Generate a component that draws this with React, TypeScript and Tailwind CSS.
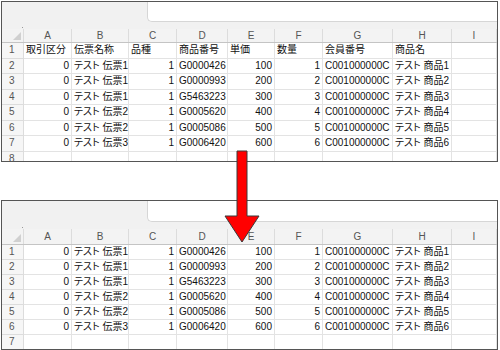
import React from "react";

const cols = "grid-cols-[22px_48px_57px_48px_51px_47px_48px_70px_59px_1fr]";
const letters = ["A", "B", "C", "D", "E", "F", "G", "H", "I"];
// right-aligned columns (numbers)
const rightCols = [0, 2, 4, 5];

const header = ["取引区分", "伝票名称", "品種", "商品番号", "単価", "数量", "会員番号", "商品名", ""];
const data = [
  ["0", "テスト 伝票1", "1", "G0000426", "100", "1", "C001000000C", "テスト 商品1", ""],
  ["0", "テスト 伝票1", "1", "G0000993", "200", "2", "C001000000C", "テスト 商品2", ""],
  ["0", "テスト 伝票1", "1", "G5463223", "300", "3", "C001000000C", "テスト 商品3", ""],
  ["0", "テスト 伝票2", "1", "G0005620", "400", "4", "C001000000C", "テスト 商品4", ""],
  ["0", "テスト 伝票2", "1", "G0005086", "500", "5", "C001000000C", "テスト 商品5", ""],
  ["0", "テスト 伝票3", "1", "G0006420", "600", "6", "C001000000C", "テスト 商品6", ""],
];
const empty = ["", "", "", "", "", "", "", "", ""];

function Row({ num, cells, isHeader, h }: { num: number; cells: string[]; isHeader?: boolean; h: string }) {
  return (
    <div className={`grid ${cols} ${h}`}>
      <div className="bg-[#f6f6f6] border-r border-b border-[#dcdcdc] pl-[7px] text-[#555] flex items-center">
        {num}
      </div>
      {cells.map((c, i) => (
        <div
          key={i}
          className={`border-r border-b border-[#e3e3e3] flex items-center px-[2px] whitespace-nowrap overflow-visible ${
            !isHeader && rightCols.includes(i) ? "justify-end" : "justify-start"
          }`}
        >
          {c}
        </div>
      ))}
    </div>
  );
}

function Sheet({ rows, topH, headH, rowH, panelH }: { rows: { num: number; cells: string[]; isHeader?: boolean }[]; topH: string; headH: string; rowH: string; panelH: string }) {
  return (
    <div className={`mx-[1px] w-[497px] ${panelH} border border-[#555] overflow-hidden bg-white flex flex-col`}>
      {/* formula bar strip */}
      <div className={`flex ${topH} bg-[#f1f1f1] shrink-0`}>
        <div className="w-[145px]" />
        <div className="flex-1 bg-white border-l border-b border-[#d6d6d6] rounded-bl-[5px]" />
      </div>
      <div className="h-[7px] bg-[#f1f1f1] shrink-0" />
      {/* column letters */}
      <div className={`grid ${cols} ${headH} bg-[#f3f3f3] border-b border-[#c4c4c4] shrink-0 text-[#555]`}>
        <div className="relative border-r border-[#dcdcdc]">
          <div className="absolute right-[2px] bottom-[2px] w-0 h-0 border-l-[8px] border-l-transparent border-b-[8px] border-b-[#d0d0d0]" />
          <div className="absolute right-0 -top-[2px] w-[1px] h-[1px] bg-[#999]" />
        </div>
        {letters.map((l) => (
          <div key={l} className="border-r border-[#dcdcdc] flex items-center justify-center">
            {l}
          </div>
        ))}
      </div>
      {rows.map((r) => (
        <Row key={r.num} num={r.num} cells={r.cells} isHeader={r.isHeader} h={`${rowH} shrink-0`} />
      ))}
    </div>
  );
}

export default function App() {
  const topRows = [
    { num: 1, cells: header, isHeader: true },
    ...data.map((d, i) => ({ num: i + 2, cells: d })),
    { num: 8, cells: empty },
  ];
  const bottomRows = [...data.map((d, i) => ({ num: i + 1, cells: d })), { num: 7, cells: empty }];

  return (
    <div className="relative w-[500px] h-[350px] bg-white text-[10px] text-[#111] font-['Liberation_Sans','Noto_Sans_CJK_JP',sans-serif] [font-feature-settings:'palt'] leading-none">
      <div className="pt-[1px]">
        <Sheet rows={topRows} topH="h-[20px]" headH="h-[14px]" rowH="h-[15.5px]" panelH="h-[161px]" />
      </div>
      <div className="mt-[38px]">
        <Sheet rows={bottomRows} topH="h-[21px]" headH="h-[16px]" rowH="h-[15px]" panelH="h-[150px]" />
      </div>
      {/* red arrow */}
      <svg className="absolute left-0 top-0 pointer-events-none" width="500" height="350">
        <polygon
          points="237,151 247,151 247,216 259,216 242,242 225,216 237,216"
          fill="#ff0000"
          stroke="#3a3a3a"
          strokeWidth="1"
          strokeLinejoin="miter"
        />
      </svg>
    </div>
  );
}
